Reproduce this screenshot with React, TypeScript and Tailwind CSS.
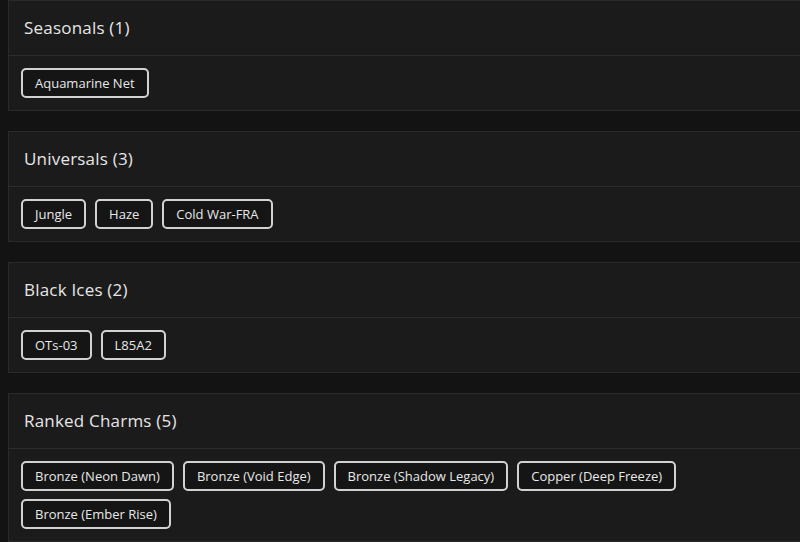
import React from "react";

type Group = {
  title: string;
  items: string[];
};

const groups: Group[] = [
  { title: "Seasonals", items: ["Aquamarine Net"] },
  { title: "Universals", items: ["Jungle", "Haze", "Cold War-FRA"] },
  { title: "Black Ices", items: ["OTs-03", "L85A2"] },
  {
    title: "Ranked Charms",
    items: [
      "Bronze (Neon Dawn)",
      "Bronze (Void Edge)",
      "Bronze (Shadow Legacy)",
      "Copper (Deep Freeze)",
      "Bronze (Ember Rise)",
    ],
  },
];

function Chip({ label }: { label: string }) {
  return (
    <span className="flex h-[30px] items-center rounded-[5px] border-2 border-[#d2d2d2] bg-[#151515] px-3 text-[13px] leading-none text-[#e8e8e8]">
      {label}
    </span>
  );
}

function GroupCard({ group }: { group: Group }) {
  return (
    <section className="-mr-2 ml-2 border border-[#2a2a2a] bg-[#1b1b1b]">
      {/* Header */}
      <div className="flex h-[55px] items-center border-b border-[#2c2c2c] px-[15px]">
        <h2 className="text-[17px] font-medium tracking-[0.2px] text-[#e6e6e6]">
          {group.title} ({group.items.length})
        </h2>
      </div>
      {/* Items */}
      <div className="flex flex-wrap gap-x-[9px] gap-y-2 p-3">
        {group.items.map((item) => (
          <Chip key={item} label={item} />
        ))}
      </div>
    </section>
  );
}

export default function App() {
  return (
    <div
      className="h-[542px] overflow-hidden bg-[#131313]"
      style={{ fontFamily: '"Open Sans", "Liberation Sans", sans-serif' }}
    >
      <div className="flex flex-col gap-5">
        {groups.map((g) => (
          <GroupCard key={g.title} group={g} />
        ))}
      </div>
    </div>
  );
}
